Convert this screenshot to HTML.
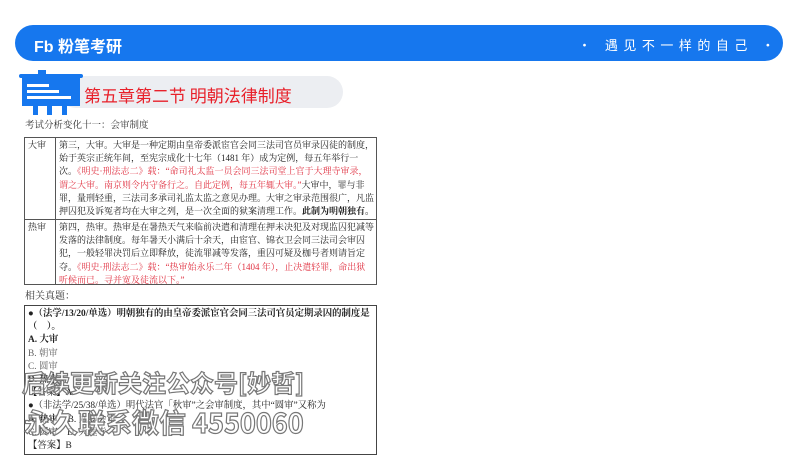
<!DOCTYPE html><html><head><meta charset="utf-8"><style>
body{margin:0;width:800px;height:450px;background:#fff;position:relative;overflow:hidden;font-family:"Liberation Serif","Noto Serif CJK SC",serif;color:#222}
.ban{position:absolute;left:15px;top:25px;width:768px;height:36px;background:#1677ee;border-radius:18px}
.logo{position:absolute;left:34px;top:33px;color:#fff;font:bold 16px "Liberation Sans","Noto Sans CJK SC",sans-serif}
.slog{position:absolute;left:578px;top:35px;color:#fff;font:13px "Noto Sans CJK SC",sans-serif;letter-spacing:5.5px;white-space:nowrap}
.tbar{position:absolute;left:60px;top:76px;width:283px;height:32px;background:#eceef2;border-radius:16px}
.ttl{position:absolute;left:84px;top:82px;color:#e8202a;font:17px "Noto Sans CJK SC",sans-serif}
.sm{position:absolute;font-size:9.5px;color:#333}
.tb{position:absolute;left:24px;top:137px;width:353px;border:1px solid #555;box-sizing:border-box;font-size:9px;line-height:13.2px;white-space:nowrap;overflow:hidden}
.c1{position:absolute;left:3px}
.c2{position:absolute;left:34px}
.vl{position:absolute;left:30px;top:0;bottom:0;border-left:1px solid #555}
.r{color:#e03040}
.q{position:absolute;left:24px;top:305px;width:353px;height:150px;border:1px solid #444;font-size:9.4px;line-height:13.2px;padding:2px 3px;box-sizing:border-box;white-space:nowrap;overflow:hidden}
.wm{position:absolute;font:bold 22px "Noto Sans CJK SC",sans-serif;color:rgba(255,255,255,.5);-webkit-text-stroke:1.2px #777;white-space:nowrap}
</style></head><body>
<div class="ban"></div>
<div class="logo">Fb 粉笔考研</div>
<div class="slog">·&nbsp;遇见不一样的自己&nbsp;·</div>
<div class="tbar"></div>
<svg style="position:absolute;left:18px;top:68px" width="66" height="48"><rect x="20" y="2" width="8" height="4" fill="#1677ee"/><rect x="1" y="6" width="64" height="4" rx="2" fill="#1677ee"/><rect x="4" y="10" width="58" height="28" fill="#1677ee"/><rect x="9" y="16" width="22" height="3" fill="#fff"/><rect x="9" y="22" width="32" height="3" fill="#fff"/><rect x="9" y="28" width="44" height="3" fill="#fff"/><rect x="15" y="38" width="5" height="9" fill="#1677ee"/><rect x="29" y="38" width="5" height="9" fill="#1677ee"/><rect x="44" y="38" width="5" height="9" fill="#1677ee"/></svg>
<div class="ttl">第五章第二节 明朝法律制度</div>
<div class="sm" style="left:25px;top:117px">考试分析变化十一：会审制度</div>
<div class="tb" style="height:148px">
<div class="vl"></div>
<div style="position:absolute;left:0;right:0;top:81px;border-top:1px solid #555"></div>
<div class="c1" style="top:1px">大审</div>
<div class="c2" style="top:1px">第三，大审。大审是一种定期由皇帝委派宦官会同三法司官员审录囚徒的制度，<br>始于英宗正统年间，至宪宗成化十七年（1481 年）成为定例，每五年举行一<br>次。<span class="r">《明史·刑法志二》载：“命司礼太监一员会同三法司堂上官于大理寺审录，<br>谓之大审。南京则令内守备行之。自此定例，每五年辄大审。”</span>大审中，罪与非<br>罪，量刑轻重，三法司多承司礼监太监之意见办理。大审之审录范围很广，凡监<br>押囚犯及诉冤者均在大审之列，是一次全面的狱案清理工作。<b>此制为明朝独有。</b></div>
<div class="c1" style="top:83px">热审</div>
<div class="c2" style="top:83px">第四，热审。热审是在暑热天气来临前决遣和清理在押未决犯及对现监囚犯减等<br>发落的法律制度。每年暑天小满后十余天，由宦官、锦衣卫会同三法司会审囚<br>犯，一般轻罪决罚后立即释放，徒流罪减等发落，重囚可疑及枷号者则请旨定<br>夺。<span class="r">《明史·刑法志二》载：“热审始永乐二年（1404 年），止决遣轻罪，命出狱<br>听候而已。寻并宽及徒流以下。”</span></div>
</div>
<div class="sm" style="left:25px;top:287px;font-size:10px">相关真题：</div>
<div class="q"><b>●（法学/13/20/单选）明朝独有的由皇帝委派宦官会同三法司官员定期录囚的制度是<br>（　）。</b><br><b>A. 大审</b><br><span style="color:#666">B. 朝审</span><br><span style="color:#666">C. 圆审</span><br><b>D. 热审</b><br>【答案】A<br>●（非法学/25/38/单选）明代法官「秋审”之会审制度，其中“圆审”又称为<br><b>A. 热审</b>　B. 九卿会审<br>C. 圆审　D. 大理寺<br>【答案】B</div>
<div class="wm" style="left:22px;top:364px;font-size:24px">后续更新关注公众号[妙哲]</div>
<div class="wm" style="left:24px;top:402px;font-size:27px">永久联系微信 4550060</div>
</body></html>
